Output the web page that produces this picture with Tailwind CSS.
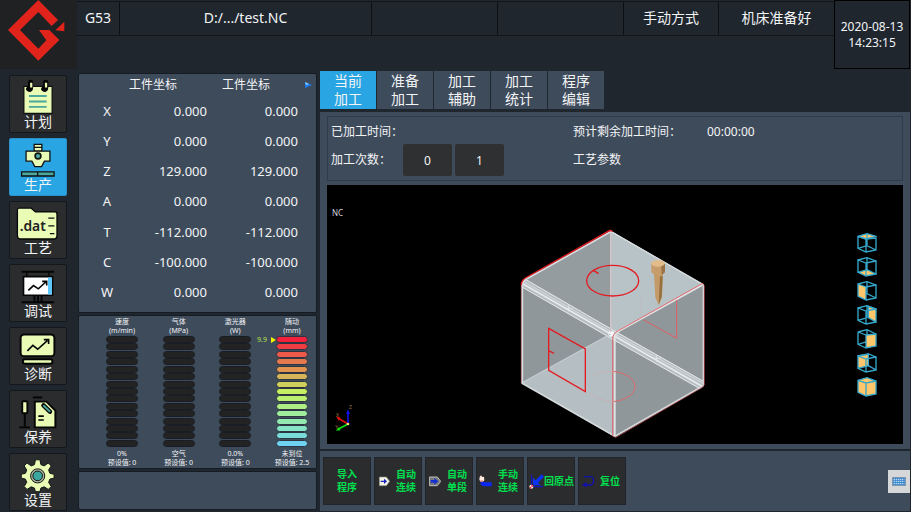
<!DOCTYPE html>
<html lang="zh-CN">
  <head>
    <meta charset="UTF-8" />
    <meta name="viewport" content="width=device-width, initial-scale=1.0" />
    <title>激光切割数控系统</title>
    <script src="https://cdn.jsdelivr.net/npm/@tailwindcss/browser@4"></script>
  </head>
  <body
    class="flex min-h-screen flex-col bg-[#1f262e] font-['Noto_Sans','Noto_Sans_CJK_SC',sans-serif] text-xs text-gray-100"
  >
    <!-- Status bar -->
    <header class="flex h-[69px]">
      <div class="w-[77px] shrink-0 bg-[#202123]">
        <svg viewBox="0 0 231 207" class="h-[69px] w-[77px]" fill="#e0241c">
          <path
            d="M115 0 174 60 155 78 115 36 60 90 115 146 139 121 117 90 148 90 178 120 115 182 24 90Z"
          />
          <path d="M166 91 193 65V94Z" />
        </svg>
      </div>
      <div
        class="mt-px flex h-[35px] flex-1 border-y border-[#12161b] text-center text-sm leading-8 divide-x divide-[#0c0f13]"
      >
        <div class="w-[43px]">G53</div>
        <div class="w-[252px]">D:/.../test.NC</div>
        <div class="w-[126px]"></div>
        <div class="w-[126px]"></div>
        <div class="w-[95px]">手动方式</div>
        <div class="flex-1">机床准备好</div>
      </div>
      <div
        class="mr-px flex w-[76px] shrink-0 flex-col justify-center border border-black text-center leading-4"
      >
        <span>2020-08-13</span>
        <span>14:23:15</span>
      </div>
    </header>

    <div class="flex flex-1">
      <!-- Main menu -->
      <nav class="flex w-[78px] shrink-0 flex-col gap-[5px] pt-[6px] pl-[9px] text-sm">
        <button
          class="h-[58px] w-[58px] rounded-xs border border-[#14181c] bg-[#2b2c2e]"
        >
          <svg viewBox="26 15 174 105" class="h-[35px] w-full overflow-visible">
            <path d="M69 42H157V126H69Z" fill="#e9fbb5" stroke="#111" stroke-width="4" />
            <path d="M85 72H140M85 89H140M85 106H140" stroke="#4aa89c" stroke-width="6" />
            <path
              d="M90 30V46Q90 54 84 50M137 30V46Q137 54 131 50"
              fill="none"
              stroke="#050505"
              stroke-width="16"
              stroke-linecap="round"
            />
            <path d="M92 31V46M138 31V46" stroke="#e9fbb5" stroke-width="7" />
          </svg>
          <span class="block leading-[19px]">计划</span>
        </button>
        <button
          class="h-[58px] w-[58px] rounded-xs border border-[#2b8fc8] bg-[#28a5e2]"
        >
          <svg viewBox="26 205 174 105" class="h-[35px] w-full overflow-visible">
            <g fill="#e9fbb5" stroke="#111" stroke-width="4">
              <path d="M101 217H125V238H101Z" />
              <path d="M101 226H125" />
              <path d="M76 238H150V269H133L124 286H103L94 269H76Z" />
              <circle cx="113" cy="253" r="9" fill="#4aa89c" stroke-width="5" />
              <path d="M62 302H163V315H62Z" fill="#4aa89c" />
              <path d="M112 302V315" />
            </g>
          </svg>
          <span class="block leading-[19px]">生产</span>
        </button>
        <button
          class="h-[58px] w-[58px] rounded-xs border border-[#14181c] bg-[#2b2c2e]"
        >
          <svg viewBox="26 394 174 105" class="h-[35px] w-full overflow-visible">
            <path
              d="M54 408H91L105 420H166Q172 420 172 426V492Q172 504 160 504H60Q49 504 49 492V414Q49 408 54 408Z"
              fill="#e9fbb5"
              stroke="#050505"
              stroke-width="4"
            />
            <text x="56" y="480" font-size="43" font-weight="600" fill="#222" font-family="Noto Sans">
              .dat
            </text>
            <path
              d="M145 439H164M145 463H164M150 487H164"
              stroke="#111"
              stroke-width="4"
            />
          </svg>
          <span class="block leading-[19px]">工艺</span>
        </button>
        <button
          class="h-[58px] w-[58px] rounded-xs border border-[#14181c] bg-[#2b2c2e]"
        >
          <svg viewBox="26 10 174 105" class="h-[35px] w-full overflow-visible">
            <g fill="none" stroke="#050505">
              <path d="M62 26H163M62 121H163" stroke-width="6" />
              <path d="M78 26V42M147 26V42" stroke-width="4" />
              <path d="M102 98V120M113 98V120M124 98V120" stroke-width="6" />
              <path d="M68 41H158V99H68Z" fill="#fff" stroke-width="5" />
              <path d="M144 44H156V97H144Z" fill="#5bc8ff" stroke="none" />
              <path d="M83 84 99 69 114 79 138 57M126 56H140V69" stroke-width="5" />
            </g>
          </svg>
          <span class="block leading-[19px]">调试</span>
        </button>
        <button
          class="h-[58px] w-[58px] rounded-xs border border-[#14181c] bg-[#2b2c2e]"
        >
          <svg viewBox="26 201 174 105" class="h-[35px] w-full overflow-visible">
            <g fill="#e9fbb5" stroke="#050505" stroke-width="6">
              <rect x="59" y="216" width="105" height="68" rx="11" />
              <rect x="66" y="293" width="92" height="14" rx="7" />
              <path
                d="M80 267 97 250 112 262 142 235M131 232H146V246"
                fill="none"
                stroke-width="5"
              />
            </g>
          </svg>
          <span class="block leading-[19px]">诊断</span>
        </button>
        <button
          class="h-[58px] w-[58px] rounded-xs border border-[#14181c] bg-[#2b2c2e]"
        >
          <svg viewBox="26 388 174 105" class="h-[35px] w-full overflow-visible">
            <g fill="none" stroke="#050505" stroke-width="6">
              <path d="M97 403H126" />
              <path d="M72 452V496M55 496H88" />
              <rect x="64" y="415" width="16" height="37" rx="3" fill="#e9fbb5" />
              <path d="M103 416H139L167 444V496H103Z" fill="#e9fbb5" />
              <path d="M130 428 150 447" stroke-width="14" stroke-linecap="round" />
              <path
                d="M131 429 149 446"
                stroke="#4aa89c"
                stroke-width="6"
                stroke-linecap="round"
              />
              <path d="M114 461H131M114 473H131" stroke-width="5" />
            </g>
          </svg>
          <span class="block leading-[19px]">保养</span>
        </button>
        <button
          class="h-[58px] w-[58px] rounded-xs border border-[#14181c] bg-[#2b2c2e]"
        >
          <svg viewBox="26 577 174 105" class="h-[35px] w-full overflow-visible">
            <g stroke="#111" stroke-width="3">
              <path
                d="M105 590H119L122 605 132 609 145 600 154 609 146 622 150 632 163 635V647L150 650 146 660 154 673 145 682 132 674 122 678 119 689H105L102 678 92 674 79 682 70 673 78 660 74 650 61 647V635L74 632 78 622 70 609 79 600 92 609 102 605Z"
                fill="#e9fbb5"
              />
              <circle cx="112" cy="640" r="22" fill="#a9b49a" />
              <circle cx="112" cy="640" r="15" fill="#3aa6a0" />
            </g>
          </svg>
          <span class="block leading-[19px]">设置</span>
        </button>
      </nav>

      <!-- Coordinates and gauges -->
      <aside class="mr-[3px] flex w-[239px] shrink-0 flex-col gap-[2px] pt-1 pb-[3px]">
        <section class="rounded-xs border border-[#161c24] bg-[#3e4b5b] pb-[5px]">
          <table class="h-[233px] w-full table-fixed">
            <thead>
              <tr class="h-[22px]">
                <th class="w-[50px]"></th>
                <th class="w-[78px] text-left font-normal">工件坐标</th>
                <th class="w-[91px] pl-[15px] text-left font-normal">工件坐标</th>
                <th>
                  <button aria-label="下一组" class="block px-[6px]">
                    <svg viewBox="0 0 8 8" class="size-2">
                      <path d="M1 1 8 4 1 7Z" fill="#1d7df0" />
                      <path d="M1 1 5 3 2 4Z" fill="#8fd0ff" />
                    </svg>
                  </button>
                </th>
              </tr>
            </thead>
            <tbody id="axes" class="text-right text-[13px] leading-[18px]"></tbody>
          </table>
        </section>

        <section
          class="flex h-[154px] justify-between rounded-xs border border-[#161c24] bg-[#3e4b5b] pt-px pr-1 pl-[23px] text-center text-[7px] leading-[9px]"
        >
          <div class="flex w-10 flex-col items-center">
            <span>速度</span><span>(m/min)</span>
            <div class="gauge mt-px flex h-[111px] flex-col justify-between"></div>
            <span class="mt-[2px]">0%</span><span class="whitespace-nowrap">预设值: 0</span>
          </div>
          <div class="flex w-10 flex-col items-center">
            <span>气体</span><span>(MPa)</span>
            <div class="gauge mt-px flex h-[111px] flex-col justify-between"></div>
            <span class="mt-[2px]">空气</span><span class="whitespace-nowrap">预设值: 0</span>
          </div>
          <div class="flex w-10 flex-col items-center">
            <span>激光器</span><span>(W)</span>
            <div class="gauge mt-px flex h-[111px] flex-col justify-between"></div>
            <span class="mt-[2px]">0.0%</span><span class="whitespace-nowrap">预设值: 0</span>
          </div>
          <div class="relative flex w-10 flex-col items-center">
            <span>随动</span><span>(mm)</span>
            <div id="follow" class="mt-px flex h-[111px] flex-col justify-between"></div>
            <span class="mt-[2px]">未到位</span><span class="whitespace-nowrap">预设值: 2.5</span>
            <span class="absolute top-[18px] right-9 flex items-center gap-1 text-[#b6e04a]">
              9.9
              <svg viewBox="0 0 5 6" class="h-[6px] w-[5px]">
                <path d="M0 0 5 3 0 6Z" fill="#f4f400" />
              </svg>
            </span>
          </div>
        </section>

        <section
          class="min-h-[39px] flex-1 rounded-xs border border-[#161c24] bg-[#3e4b5b]"
        ></section>
      </aside>

      <!-- Machining page -->
      <main class="mr-px flex flex-1 flex-col pt-[2px] pb-[2px]">
        <div class="flex gap-px text-sm leading-[18px]">
          <button class="w-14 bg-[#28a5e2] px-3 py-px">当前<br />加工</button>
          <button class="w-14 bg-[#3e4b5b] px-3 py-px">准备<br />加工</button>
          <button class="w-14 bg-[#3e4b5b] px-3 py-px">加工<br />辅助</button>
          <button class="w-14 bg-[#3e4b5b] px-3 py-px">加工<br />统计</button>
          <button class="w-14 bg-[#3e4b5b] px-3 py-px">程序<br />编辑</button>
        </div>

        <section class="mt-[3px] flex flex-1 flex-col gap-1 bg-[#3e4b5b] px-[7px] pt-1 pb-[5px]">
          <div
            class="grid grid-cols-[242px_1fr] items-center border border-[#303b49] px-[3px] pt-[2px] pb-1"
          >
            <div class="h-[25px] leading-[25px]">已加工时间：</div>
            <div class="flex leading-[25px]">
              <span class="w-[134px]">预计剩余加工时间：</span>
              <span>00:00:00</span>
            </div>
            <div class="flex items-center">
              <label for="count" class="w-[72px]">加工次数：</label>
              <input
                id="count"
                value="0"
                class="mr-[3px] h-8 w-[49px] rounded-xs bg-[#2f3031] text-center"
              />
              <input
                aria-label="总次数"
                value="1"
                class="h-8 w-[49px] rounded-xs bg-[#2f3031] text-center"
              />
            </div>
            <div>工艺参数</div>
          </div>

          <!-- 3D view -->
          <div class="grid flex-1 grid-cols-[1fr_auto_1fr] bg-black">
            <div class="flex flex-col justify-between pt-[22px] pb-[10px] pl-[5px]">
              <span class="text-[8px] leading-3 text-gray-300">NC</span>
              <svg viewBox="0 0 66 90" class="ml-1 h-[30px] w-[22px] overflow-visible">
                <g fill="none" stroke-width="5">
                  <path d="M36 60 6 42" stroke="#e01010" />
                  <path d="M36 60 6 76" stroke="#10e010" />
                  <path d="M36 60V24" stroke="#1010e8" />
                </g>
                <path d="M0 37 14 41 8 50Z" fill="#e01010" />
                <path d="M0 80 8 70 14 79Z" fill="#10e010" />
                <path d="M30 30 36 16 42 30Z" fill="#1010e8" />
                <circle cx="36" cy="60" r="4" fill="#ffe080" />
                <g font-size="16" fill="#9a7440" font-family="Noto Sans">
                  <text x="0" y="39">X</text>
                  <text x="-2" y="76">Y</text>
                  <text x="39" y="16">Z</text>
                </g>
              </svg>
            </div>

            <svg viewBox="0 0 630 666" class="mt-[34px] h-[222px] w-[210px]">
              <!-- faces -->
              <path d="M302 35 46 178Q35 184 35 198V492L315 654 580 500V198Z" fill="#90979b" />
              <path d="M302 35 580 196 320 342 302 345Z" fill="#b8c3c7" />
              <path d="M302 345 35 492 310 651V350Z" fill="#b5bfc3" />
              <path d="M302 35V345L35 190Z" fill="#959ca0" />
              <!-- rounded seam -->
              <path d="M40 192 302 343 576 498" stroke="#b7bec1" stroke-width="25" fill="none" />
              <g stroke="#e6eaec" stroke-width="3" fill="none">
                <path d="M48 182 310 334 582 488" />
                <path d="M42 188 306 340 580 494" stroke-width="2" />
                <path d="M38 194 304 346 576 502" stroke-width="5" />
                <path d="M36 204 300 356 568 508" />
              </g>
              <circle cx="304" cy="344" r="9" fill="#f4f6f7" />
              <path d="M166 268H188M176 258V278M430 418H452M440 408V428" stroke="#e8ecee" stroke-width="2" />
              <!-- edges -->
              <g fill="none" stroke-width="4">
                <path d="M302 42V340" stroke="#d6c4c8" />
                <path d="M302 37 580 197V500" stroke="#d9dddf" />
                <path d="M35 492 315 652 580 500" stroke="#d3d8da" stroke-width="5" />
                <path d="M35 492 302 345" stroke="#c5cdd0" />
                <path d="M302 38 48 181Q37 188 37 200V492" stroke="#d9dddf" stroke-width="5" />
                <path d="M576 198 330 334Q314 343 314 358V650" stroke="#e0e3e5" stroke-width="6" />
              </g>
              <g fill="none" stroke="#e31c22" stroke-width="4">
                <path d="M308 37 300 34 46 177Q34 184 34 198" />
                <path d="M34 198V492" stroke="#d88488" stroke-width="2" />
                <path d="M578 193 325 335Q308 344 308 360V650" stroke="#e0686c" stroke-width="3" />
                <path d="M578 193 583 200V498L575 506 318 655 306 650" stroke="#d9646a" stroke-width="2" />
                <ellipse cx="308" cy="185" rx="78" ry="46" />
                <path d="M250 154 266 164" />
                <path d="M116 328 226 390V518L116 454ZM116 395 132 403" />
                <path d="M310 457A76 46 0 0 1 310 548" stroke="#e0686c" stroke-width="3" />
                <path d="M310 548Q255 543 240 520M250 470Q275 457 310 457" stroke="#ccabad" stroke-width="2" />
                <path d="M500 243V358L400 302" stroke="#de5f64" stroke-width="3" />
                <path d="M394 296V240" stroke="#c3b8bb" stroke-width="2" />
              </g>
              <!-- nozzle -->
              <path d="M432 165H459L456 235 446 259 436 235Z" fill="#c49a68" />
              <path d="M424 134V160Q444 180 465 160V134Z" fill="#c69d6b" />
              <path d="M453 134H465V160L455 168Z" fill="#9b744a" />
              <path d="M450 172H458L455 233 446 257Z" fill="#96703f" />
              <ellipse cx="444" cy="133" rx="20" ry="10" fill="#e2bd8b" />
            </svg>

            <!-- view presets -->
            <div class="flex flex-col items-end gap-1 pt-12 pr-[26px]">
              <button aria-label="俯视" class="size-5">
                <svg viewBox="0 0 60 60" fill="none" stroke="#35a8cc" stroke-width="4">
                  <path d="M3 10 30 2 57 10 27 18Z" fill="#ffc66b" />
                  <path d="M3 10V46L27 57 57 51V15L27 18 3 10M27 18V57M30 2V38M3 46 30 38 57 51" />
                </svg>
              </button>
              <button aria-label="仰视" class="size-5">
                <svg viewBox="0 0 60 60" fill="none" stroke="#35a8cc" stroke-width="4">
                  <path d="M3 46 30 38 57 51 27 57Z" fill="#ffc66b" />
                  <path d="M3 9 30 2 57 12 27 18ZM3 9V46M27 18V57M57 12V51M30 2V38" />
                </svg>
              </button>
              <button aria-label="左视" class="size-5">
                <svg viewBox="0 0 60 60" fill="none" stroke="#35a8cc" stroke-width="4">
                  <path d="M30 2V38M3 46 30 38 57 51" />
                  <path d="M3 9 27 18V57L3 46Z" fill="#ffc66b" />
                  <path d="M3 9 30 2 57 12 27 18M57 12V51L27 57" />
                </svg>
              </button>
              <button aria-label="右视" class="size-5">
                <svg viewBox="0 0 60 60" fill="none" stroke="#35a8cc" stroke-width="4">
                  <path d="M34 4 57 12V51L34 38Z" fill="#ffc66b" />
                  <path d="M3 9 30 2 57 12 27 18ZM3 9V46L27 57 57 51M27 18V57M30 2V38L3 46" />
                </svg>
              </button>
              <button aria-label="前视" class="size-5">
                <svg viewBox="0 0 60 60" fill="none" stroke="#35a8cc" stroke-width="4">
                  <path d="M30 2V38M3 46 30 38" />
                  <path d="M27 18 57 15V51L27 57Z" fill="#ffc66b" />
                  <path d="M3 9 30 2 57 15M3 9 27 18M3 9V46L27 57" />
                </svg>
              </button>
              <button aria-label="后视" class="size-5">
                <svg viewBox="0 0 60 60" fill="none" stroke="#35a8cc" stroke-width="4">
                  <path d="M3 9 34 3V38L3 46Z" fill="#ffc66b" />
                  <path d="M3 9 34 3 57 12 27 18ZM3 46 27 57 57 51 34 38M27 18V57M57 12V51" />
                </svg>
              </button>
              <button aria-label="轴测" class="size-5">
                <svg viewBox="0 0 60 60" fill="#ffc66b" stroke="#35a8cc" stroke-width="4">
                  <path d="M3 10 30 2 57 12V51L27 57 3 46Z" />
                  <path d="M3 10 27 18 57 12M27 18V57" fill="none" />
                </svg>
              </button>
            </div>
          </div>
        </section>

        <!-- Actions -->
        <section
          class="mt-[2px] flex items-center gap-[3px] bg-[#3e4b5b] py-[6px] pl-[3px] text-[10px] leading-[13px] font-bold text-[#00e04e]"
        >
          <button class="size-12 border border-[#20252b] bg-[#2b2c2e]">
            导入<br />程序
          </button>
          <button
            class="flex size-12 items-center justify-between border border-[#20252b] bg-[#2b2c2e] pr-[5px] pl-1"
          >
            <svg viewBox="0 0 33 33" class="size-[11px]">
              <path d="M1 3H22L32 16 22 29H1Z" fill="#f4f4e4" stroke="#8c8c80" stroke-width="2" />
              <path d="M5 14H15V8L24 16 15 24V18H5Z" fill="#1424b8" />
            </svg>
            <span>自动<br />连续</span>
          </button>
          <button
            class="flex size-12 items-center justify-between border border-[#20252b] bg-[#2b2c2e] pr-[5px] pl-[3px]"
          >
            <svg viewBox="0 0 36 33" class="h-[11px] w-3">
              <path d="M1 3H25L35 16 25 29H1Z" fill="#77797c" stroke="#c0c0b8" stroke-width="3" />
              <path d="M5 12H16V6L28 16 16 26V20H5Z" fill="#1430d0" />
            </svg>
            <span>自动<br />单段</span>
          </button>
          <button
            class="flex size-12 items-center justify-between border border-[#20252b] bg-[#2b2c2e] pr-[5px] pl-[2px]"
          >
            <svg viewBox="0 0 39 36" class="h-3 w-[13px]">
              <path d="M2 6 6 1 10 6 15 5 16 16 11 21H5L1 14Z" fill="#ffe8dc" />
              <path d="M5 20H12L18 22H38V34H14L5 29Z" fill="#0c28f0" />
              <path d="M4 18H12" stroke="#e02020" stroke-width="2" />
            </svg>
            <span>手动<br />连续</span>
          </button>
          <button
            class="flex size-12 items-center justify-end border border-[#20252b] bg-[#2b2c2e] whitespace-nowrap"
          >
            <svg viewBox="0 0 45 45" class="size-[15px] shrink-0">
              <path d="M8 2V38H42" fill="none" stroke="#1414e0" stroke-width="3" />
              <path d="M12 34V11L20 19 38 1 45 8 27 26 36 34Z" fill="#0c34f0" />
              <circle cx="7" cy="38" r="6" fill="#fff" />
              <path d="M7 32A6 6 0 0 1 13 38H7V44A6 6 0 0 1 1 38H7Z" fill="#e02020" />
            </svg>
            回原点
          </button>
          <button
            class="flex size-12 items-center justify-between border border-[#20252b] bg-[#2b2c2e] pr-[5px] pl-[3px] whitespace-nowrap"
          >
            <svg viewBox="0 0 39 36" class="h-3 w-[13px]" fill="none" stroke="#1010b0" stroke-width="4">
              <path d="M6 5H24Q35 6 35 17T24 30H4M14 23 4 30 14 34" />
            </svg>
            复位
          </button>
          <button
            aria-label="键盘"
            class="ml-auto flex h-[23px] w-[22px] items-center justify-center bg-[#d5d7d9]"
          >
            <svg viewBox="0 0 42 27" class="h-[9px] w-[14px]">
              <path d="M1 1H41V26H1Z" fill="#3b86cc" stroke="#8a9096" stroke-width="2" />
              <path
                d="M5 7H37M5 13H37M5 20H37"
                stroke="#cfe6fa"
                stroke-width="3"
                stroke-dasharray="4 2"
              />
            </svg>
          </button>
        </section>
      </main>
    </div>

    <script>
      const axes = [
        ['X', '0.000'],
        ['Y', '0.000'],
        ['Z', '129.000'],
        ['A', '0.000'],
        ['T', '-112.000'],
        ['C', '-100.000'],
        ['W', '0.000'],
      ]

      const followColors = [
        '#f5203c', '#f23c44', '#ee5a4a', '#e5794e', '#e09450',
        '#d6b458', '#cfd05c', '#c6ee62', '#b9f070', '#aeee84',
        '#a0eb9c', '#92e8b0', '#86e4c6', '#7adcda', '#6ed2f0',
      ]

      document.getElementById('axes').innerHTML = axes
        .map(
          ([name, value]) => `
            <tr>
              <th class="pl-[6px] text-center font-normal">${name}</th>
              <td>${value}</td>
              <td>${value}</td>
              <td></td>
            </tr>`
        )
        .join('')

      document.querySelectorAll('.gauge').forEach((gauge) => {
        gauge.innerHTML = followColors
          .map(
            () =>
              '<i class="h-[7px] w-8 rounded-full border border-[#1a1e24] bg-[#232323]"></i>'
          )
          .join('')
      })

      document.getElementById('follow').innerHTML = followColors
        .map(
          (color) =>
            `<i class="h-[7px] w-8 rounded-full border border-[#2b3440]" style="background: ${color}"></i>`
        )
        .join('')
    </script>
  </body>
</html>
